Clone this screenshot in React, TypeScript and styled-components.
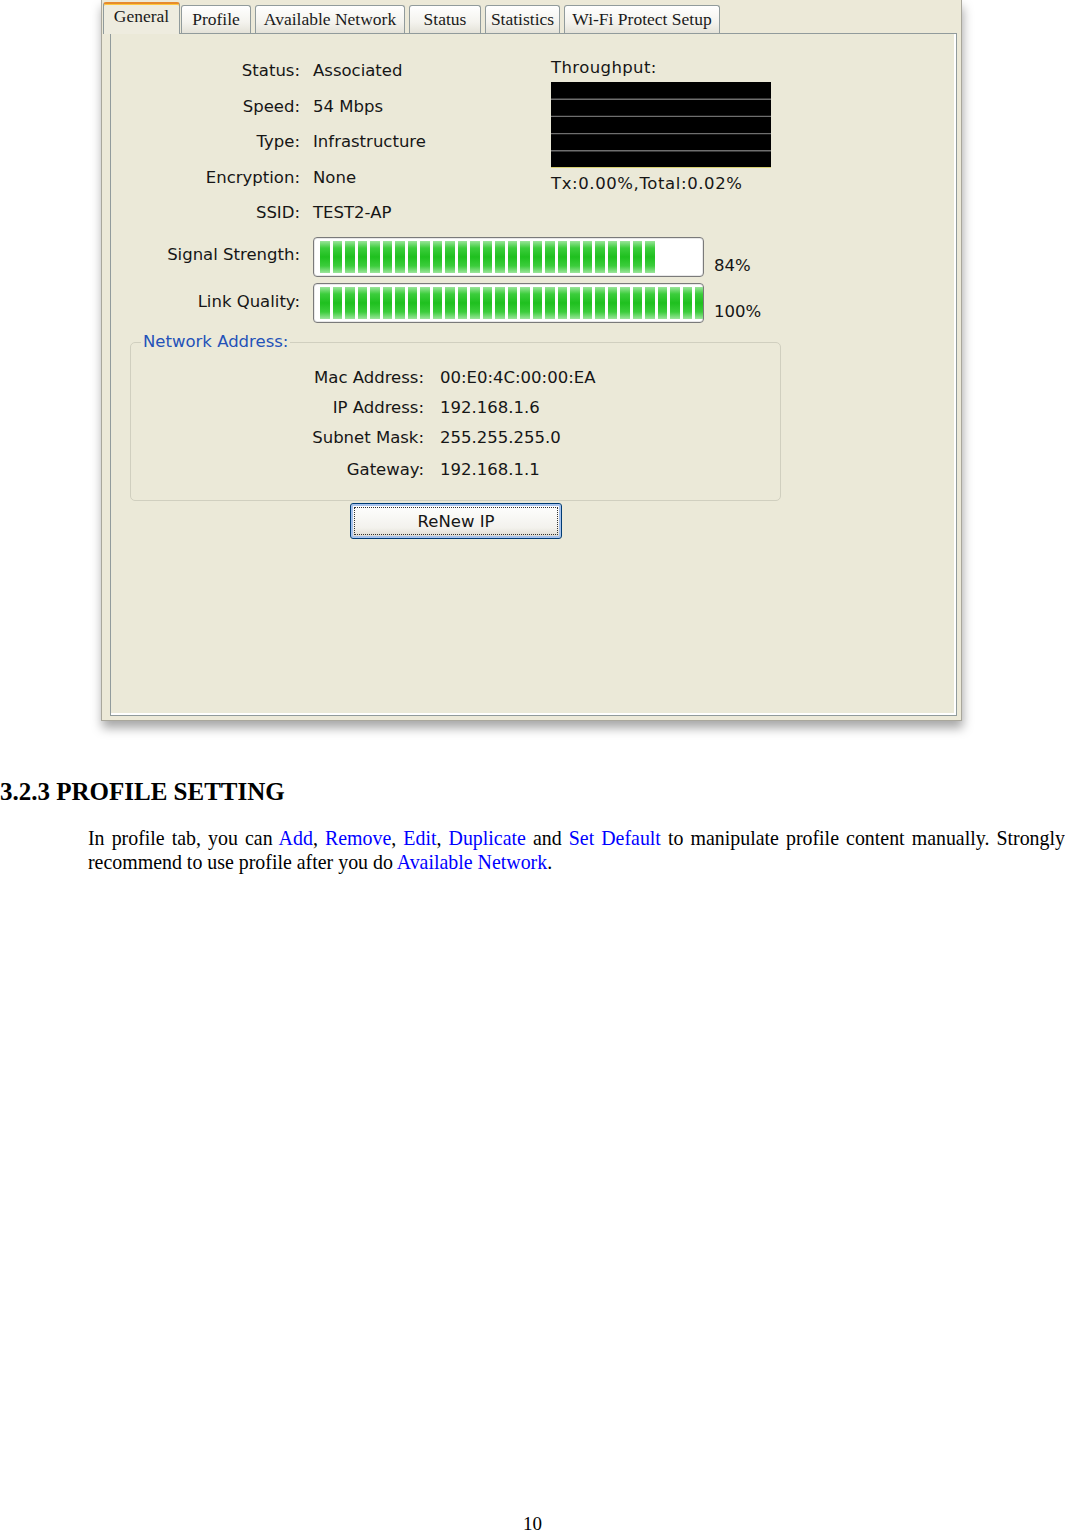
import styled, { createGlobalStyle } from 'styled-components';

const GlobalStyle = createGlobalStyle`
  html, body {
    margin: 0;
    padding: 0;
    background: #ffffff;
  }
  body {
    font-family: 'Liberation Serif', 'Times New Roman', serif;
  }
`;

const Page = styled.div`
  width: 1065px;
  height: 1534px;
  display: flex;
  flex-direction: column;
  overflow: hidden;
`;

// the captured utility window

const Window = styled.div`
  box-sizing: border-box;
  width: 861px;
  height: 721px;
  margin-left: 101px;
  background: #ece9d8;
  border: 1px solid #a9a79c;
  border-top: none;
  box-shadow: 1px 7px 10px rgba(0, 0, 0, 0.35);
  display: flex;
  flex-direction: column;
`;

const TabStrip = styled.div`
  height: 33px;
  display: flex;
  align-items: flex-end;
  gap: 4px;
  padding-left: 1px;
  position: relative;
  z-index: 2;
`;

const Tab = styled.div<{ $active?: boolean; $w: number }>`
  box-sizing: border-box;
  width: ${(p) => p.$w}px;
  height: ${(p) => (p.$active ? 32 : 28)}px;
  margin-bottom: ${(p) => (p.$active ? -1 : 0)}px;
  margin-right: ${(p) => (p.$active ? -3 : 0)}px;
  border: 1px solid #919b9c;
  border-bottom: none;
  border-top: ${(p) => (p.$active ? '2px solid #e68b2c' : '1px solid #919b9c')};
  box-shadow: ${(p) => (p.$active ? 'inset 0 1px 0 #ffc73c' : 'none')};
  border-radius: 3px 3px 0 0;
  background: ${(p) =>
    p.$active ? '#eeecdf' : 'linear-gradient(#ffffff, #f4f3ee 60%, #e4e2d8)'};
  font-family: 'Liberation Serif', 'Times New Roman', serif;
  font-size: 17.5px;
  line-height: ${(p) => (p.$active ? 25 : 27)}px;
  color: #1a1a1a;
  text-align: center;
  white-space: nowrap;
`;

const Panel = styled.div`
  flex: 1;
  margin: 0 4px 4px 8px;
  border: 1px solid #919b9c;
  box-shadow: inset -2px -2px 0 #ffffff;
  background: #ebe9d8;
  padding-top: 19px;
  font-family: 'DejaVu Sans', Verdana, sans-serif;
  font-size: 16.5px;
  color: #161616;
`;

const TopRow = styled.div`
  display: flex;
  align-items: flex-start;
`;

const InfoGrid = styled.div`
  width: 440px;
  display: grid;
  grid-template-columns: 189px 1fr;
  grid-auto-rows: 35.5px;
  column-gap: 13px;
  align-items: center;
`;

const Label = styled.div`
  text-align: right;
  white-space: nowrap;
`;

const Value = styled.div`
  white-space: nowrap;
`;

const Throughput = styled.div`
  width: 220px;
  margin-top: 5px;
`;

const ThroughputTitle = styled.div`
  line-height: 20px;
  letter-spacing: 0.4px;
`;

const Chart = styled.svg`
  display: block;
  margin-top: 4px;
`;

const ThroughputText = styled.div`
  margin-top: 6px;
  line-height: 20px;
  letter-spacing: 0.6px;
  white-space: nowrap;
`;

const BarGrid = styled.div`
  margin-top: 6.5px;
  display: grid;
  grid-template-columns: 189px 391px auto;
  grid-auto-rows: 40px;
  column-gap: 13px;
  row-gap: 6px;
`;

const BarLabel = styled(Label)<{ $lift: number }>`
  align-self: center;
  padding-bottom: ${(p) => p.$lift}px;
`;

const Bar = styled.div`
  box-sizing: border-box;
  border: 1px solid #7a7a7a;
  border-radius: 4px;
  background: #ffffff;
  box-shadow: inset 0 0 0 1px #e8e8e8;
  padding: 3px 2px 3px 6px;
  display: flex;
  gap: 3px;
  overflow: hidden;
`;

const Segment = styled.div`
  flex: 0 0 9.5px;
  height: 100%;
  background: linear-gradient(
    to bottom,
    #9be59b 0%,
    #3ccd3c 22%,
    #1fc01f 50%,
    #3ccd3c 78%,
    #9be59b 100%
  );
`;

const Percent = styled.div`
  align-self: end;
  line-height: 22px;
  margin-left: -3px;
`;

const Group = styled.fieldset`
  box-sizing: border-box;
  width: 651px;
  margin: 9px 0 0 19px;
  padding: 0 0 14px 0;
  border: 1px solid #d0cfbf;
  border-radius: 5px;
  min-width: 0;
`;

const GroupTitle = styled.legend`
  margin-left: 10px;
  padding: 0 2px;
  line-height: 20px;
  color: #2452b8;
`;

const AddrGrid = styled.div`
  margin-top: 10px;
  display: grid;
  grid-template-columns: 293px 1fr;
  grid-template-rows: 30px 30px 31px 33px;
  column-gap: 16px;
  align-items: center;
`;

const RenewButton = styled.button`
  position: relative;
  box-sizing: border-box;
  display: block;
  width: 212px;
  height: 36px;
  margin: 2px 0 0 239px;
  border: 1px solid #003c74;
  border-radius: 3px;
  background: linear-gradient(#ffffff, #f3f2ed 70%, #dcd8cc);
  box-shadow: inset 0 0 0 2px #a8c4ee;
  font-family: 'DejaVu Sans', Verdana, sans-serif;
  font-size: 16.5px;
  color: #161616;
  padding: 0;
  &::after {
    content: '';
    position: absolute;
    inset: 3px;
    border: 1px dotted #333;
  }
`;

// document text below the screenshot

const Heading = styled.h3`
  margin: 57px 0 0;
  font-family: 'Liberation Serif', 'Times New Roman', serif;
  font-weight: 700;
  font-size: 25px;
  line-height: 28px;
  color: #000;
`;

const Paragraph = styled.p`
  margin: 20px 0 0 88px;
  font-family: 'Liberation Serif', 'Times New Roman', serif;
  font-size: 19.9px;
  line-height: 24px;
  text-align: justify;
  color: #000;
`;

const Link = styled.span`
  color: #0000ff;
`;

const PageNumber = styled.div`
  margin-top: auto;
  text-align: center;
  font-family: 'Liberation Serif', 'Times New Roman', serif;
  font-size: 19px;
  line-height: 20px;
  color: #000;
`;

const tabs = [
  { name: 'General', w: 77, active: true },
  { name: 'Profile', w: 70 },
  { name: 'Available Network', w: 150 },
  { name: 'Status', w: 72 },
  { name: 'Statistics', w: 75 },
  { name: 'Wi-Fi Protect Setup', w: 156 },
];

const info = [
  ['Status:', 'Associated'],
  ['Speed:', '54 Mbps'],
  ['Type:', 'Infrastructure'],
  ['Encryption:', 'None'],
  ['SSID:', 'TEST2-AP'],
];

const bars = [
  { label: 'Signal Strength:', pct: 84, lift: 6 },
  { label: 'Link Quality:', pct: 100, lift: 4 },
];

const address = [
  ['Mac Address:', '00:E0:4C:00:00:EA'],
  ['IP Address:', '192.168.1.6'],
  ['Subnet Mask:', '255.255.255.0'],
  ['Gateway:', '192.168.1.1'],
];

function ThroughputChart() {
  return (
    <Chart width="220" height="86" viewBox="0 0 220 86">
      <rect x="0" y="0" width="220" height="86" fill="#000" />
      {[17.2, 34.4, 51.6, 68.8].map((y) => (
        <line key={y} x1="0" x2="220" y1={y} y2={y} stroke="#6e6e6e" strokeWidth="1.4" />
      ))}
      <line x1="0" x2="220" y1="85.5" y2="85.5" stroke="#d6cf72" strokeWidth="1" />
    </Chart>
  );
}

export default function App() {
  return (
    <Page>
      <GlobalStyle />
      <Window>
        <TabStrip>
          {tabs.map((t) => (
            <Tab key={t.name} $w={t.w} $active={t.active}>
              {t.name}
            </Tab>
          ))}
        </TabStrip>
        <Panel>
          <TopRow>
            <InfoGrid>
              {info.map(([l, v]) => (
                <>
                  <Label key={l}>{l}</Label>
                  <Value key={v}>{v}</Value>
                </>
              ))}
            </InfoGrid>
            <Throughput>
              <ThroughputTitle>Throughput:</ThroughputTitle>
              <ThroughputChart />
              <ThroughputText>Tx:0.00%,Total:0.02%</ThroughputText>
            </Throughput>
          </TopRow>
          <BarGrid>
            {bars.map((b) => (
              <>
                <BarLabel key={b.label} $lift={b.lift}>
                  {b.label}
                </BarLabel>
                <Bar key={b.label + 'bar'}>
                  {Array.from({ length: Math.round(b.pct * 0.32) }).map((_, i) => (
                    <Segment key={i} />
                  ))}
                </Bar>
                <Percent key={b.label + 'pct'}>{b.pct}%</Percent>
              </>
            ))}
          </BarGrid>
          <Group>
            <GroupTitle>Network Address:</GroupTitle>
            <AddrGrid>
              {address.map(([l, v]) => (
                <>
                  <Label key={l}>{l}</Label>
                  <Value key={v}>{v}</Value>
                </>
              ))}
            </AddrGrid>
          </Group>
          <RenewButton>ReNew IP</RenewButton>
        </Panel>
      </Window>

      <Heading>3.2.3 PROFILE SETTING</Heading>
      <Paragraph>
        {'In profile tab, you can '}
        <Link>Add</Link>
        {', '}
        <Link>Remove</Link>
        {', '}
        <Link>Edit</Link>
        {', '}
        <Link>Duplicate</Link>
        {' and '}
        <Link>Set Default</Link>
        {' to manipulate profile content manually. Strongly'}
        {' recommend to use profile after you do '}
        <Link>Available Network</Link>
        {'.'}
      </Paragraph>
      <PageNumber>10</PageNumber>
    </Page>
  );
}
